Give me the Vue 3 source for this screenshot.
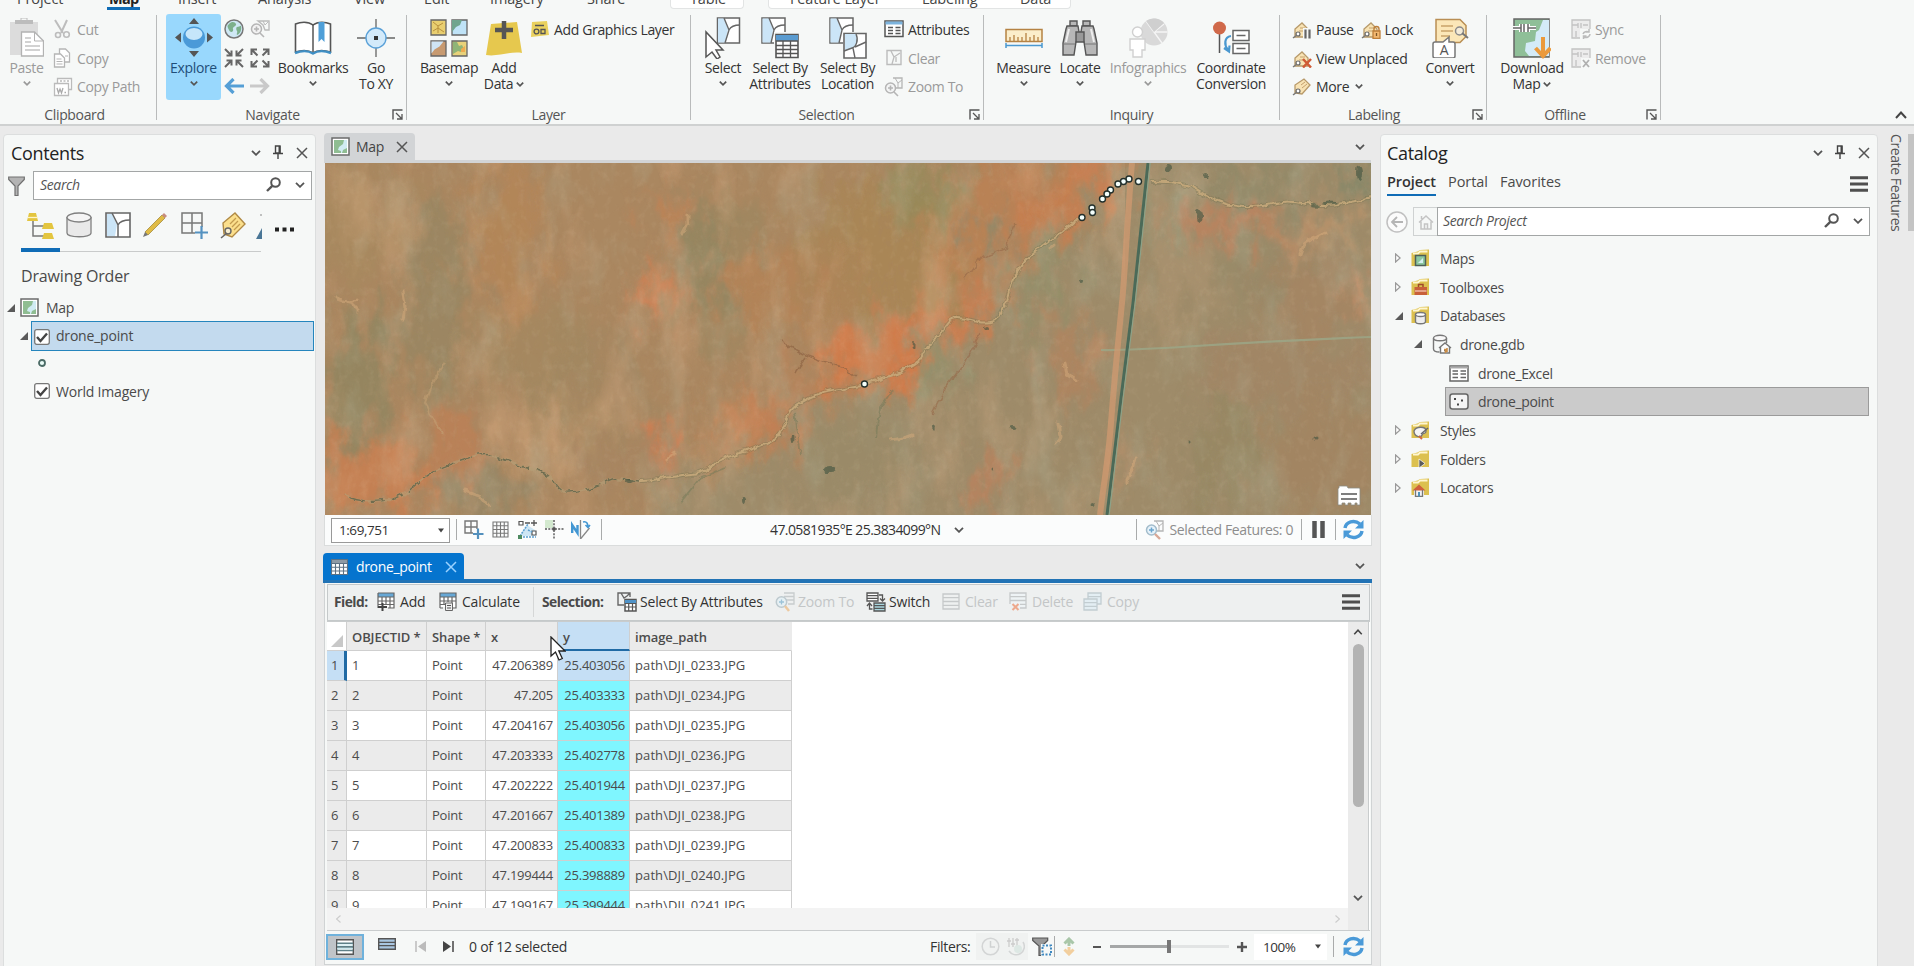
<script setup>
import { h } from 'vue'

const tag = '<path d="M3 17V9l7-6 6 6v8H5z" fill="#f8e3b4" stroke="#b89a6a" stroke-width="1.3"/><path d="M8 8l5 0M7 11h6" stroke="#c4a06c"/><circle cx="6" cy="14" r="2" fill="#fff" stroke="#666" stroke-width="1.2"/><path d="M5 15l-4 3" stroke="#777" stroke-width="1.5"/>'
const tagPlain = '<path d="M3 16V8l9-6 6 6-8 9z" fill="#f8e3b4" stroke="#b89a6a" stroke-width="1.3"/><path d="M9 8l4-3M10 11l5-4" stroke="#c4a06c"/><circle cx="6" cy="14" r="2" fill="#fff" stroke="#666" stroke-width="1.2"/><path d="M5 15l-4 3" stroke="#777" stroke-width="1.5"/>'
const folder = '<path d="M.5 4l6-1.5L9 1l9-.5V17H.5z" fill="#dcc04f"/><path d="M2 4.500h5l2-2h7.500" fill="none" stroke="#fff6cf" stroke-width="1.800"/>'
const zoomIc = '<path d="M9 1h9v10h-6" fill="none" stroke="#b5b5b5" stroke-width="1.300"/><path d="M11 1l3 5 4-3M14 6v5" fill="none" stroke="#b5b5b5"/>'

const icons = {
  paste: [34, 40, '<path d="M0 4h28v14H12v19H0z" fill="#dcdcdc"/><path d="M5 2h18v4H5z" fill="#bcbcbc"/><path d="M11 0h6v4h-6z" fill="none" stroke="#bcbcbc"/><path d="M11.500 14h13l9 9v15h-22z" fill="#fff" stroke="#b3b3b3" stroke-width="1.300"/><path d="M24.500 14v9h9" fill="none" stroke="#b3b3b3"/><path d="M15 20h6M15 24h6M15 28h15M15 32h15" stroke="#c4c4c4" stroke-width="1.500"/>'],
  cut: [18, 20, '<path d="M2 1l8 13M14 1L8 14" stroke="#bdbdbd" stroke-width="2" fill="none"/><circle cx="5" cy="16" r="2.500" fill="none" stroke="#bdbdbd" stroke-width="1.600"/><circle cx="13.500" cy="15.500" r="2.800" fill="none" stroke="#bdbdbd" stroke-width="1.600"/>'],
  copy: [18, 20, '<path d="M6.500 1h6l4 4v9h-10z" fill="#fff" stroke="#b5b5b5" stroke-width="1.300"/><path d="M1.500 6h6l4 4v9h-10z" fill="#fff" stroke="#b5b5b5" stroke-width="1.300"/><path d="M3.500 11h5M3.500 13.500h6M3.500 16h6M12 8h3" stroke="#b5b5b5"/>'],
  copyPath: [20, 20, '<path d="M4.500 1.500h14v11h-14z" fill="#fff" stroke="#bbb" stroke-width="1.300"/><path d="M7 4h9" stroke="#bbb" stroke-dasharray="2 1.500" stroke-width="1.500"/><path d="M1.500 6.500h14v12h-14z" fill="#fff" stroke="#bbb" stroke-width="1.300"/><path d="M4 11l1.500 5 1.500-4 1.500 4L10 11M11.500 15.500h1.500" fill="none" stroke="#aaa" stroke-width="1.300"/>'],
  explore: [40, 40, '<path d="M20 0l5 6H15zM20 39l5-6H15zM1 19.500l6-5v10zM39 19.500l-6-5v10z" fill="#555"/><circle cx="20" cy="19.500" r="11" fill="#4a9ad8"/><ellipse cx="20" cy="16" rx="8.500" ry="6" fill="#c6e6fa"/>'],
  globe: [20, 20, '<circle cx="10" cy="10" r="9" fill="#cfe8f5" stroke="#777" stroke-width="1.500"/><path d="M5 5c3-3 6-2 7 0s-4 3-3 5-2 5-4 1-2-4 0-6zM13 8c2 0 4-2 4-1 1 4-1 8-4 9-1-1 1-3 0-4s-1-4 0-4z" fill="#7cb08c"/>'],
  zoomSel: [20, 20, '<path d="M8 2h11v9h-4l-2-5z" fill="none" stroke="#bbb" stroke-width="1.400"/><path d="M13 2l2 4 3-3" fill="none" stroke="#bbb"/><circle cx="6.500" cy="10" r="5" fill="#f3f3f3" stroke="#b5b5b5" stroke-width="1.500"/><path d="M4 10h5M6.500 7.500v5M10 14l4 4" stroke="#b5b5b5" stroke-width="1.600"/>'],
  arrIn: [20, 20, '<path d="M1 1l6 6M19 1l-6 6M1 19l6-6M19 19l-6-6M2.500 7.500h5v-5M17.500 7.500h-5v-5M2.500 12.500h5v5M17.500 12.500h-5v5" fill="none" stroke="#666" stroke-width="2"/>'],
  arrOut: [20, 20, '<path d="M1.500 1.500l6 6M18.500 1.500l-6 6M1.500 18.500l6-6M18.500 18.500l-6-6M1.500 7V1.500H7M18.500 7V1.500H13M1.500 13v5.500H7M18.500 13v5.500H13" fill="none" stroke="#666" stroke-width="2"/>'],
  arrL: [20, 16, '<path d="M20 8H3M9.500 1L2.500 8l7 7" fill="none" stroke="#559fd6" stroke-width="3.200"/>'],
  arrR: [20, 16, '<path d="M0 8h17M10.500 1l7 7-7 7" fill="none" stroke="#c9c9c9" stroke-width="3.200"/>'],
  book: [38, 34, '<path d="M19 4C14 0 6 1 1.500 3v28c6-2 13-2 17.500 1 4-3 11-3 17.500-1V3C32 1 24 0 19 4z" fill="#fff" stroke="#555" stroke-width="1.600"/><path d="M1 32c7-2.500 14-2 18 .5 4-2.500 11-3 18-.5" fill="none" stroke="#3f8fc4" stroke-width="2.400"/><path d="M19 4v27" stroke="#555" stroke-width="1.500"/><path d="M24.500 1h6v20l-3-3-3 3z" fill="#4f9fd8"/>'],
  gotoxy: [38, 38, '<path d="M19 0v38M0 19h38" stroke="#666" stroke-width="1.300"/><circle cx="19" cy="19" r="10" fill="#d3eafa" stroke="#5aa1d8" stroke-width="1.400"/><path d="M17 17h4v4h-4z" fill="#333"/>'],
  basemap: [38, 38, '<g stroke="#666" stroke-width="1.300"><path d="M1 1h15v15H1z" fill="#e9cf70"/><path d="M22 1h15v15H22z" fill="#bfe3f7"/><path d="M1 22h15v15H1z" fill="#c79a70"/><path d="M22 22h15v15H22z" fill="#e8d27a"/></g><path d="M3 3l5 4 5-3M3 12l5-3 6 4M8 7v7" stroke="#b9903d" fill="none"/><path d="M22 1h10l-2 5-4 2-4 5z" fill="#6fa58e"/><path d="M1.500 22.500h12l-4 5-5 3-3 4z" fill="#cfe5f5"/><path d="M23 23h4l2 4 3-1 2 4-3 3-3-1-5 3z" fill="#8fb477"/><path d="M31 30l4-3v6h-4z" fill="#efab4f"/>'],
  addData: [36, 38, '<path d="M5 5l26-2 5 31c-12-2-24 4-36 2z" fill="#e6c84e"/><path d="M18 2v18M9 11h18" stroke="#555" stroke-width="4.500"/>'],
  addGfx: [19, 18, '<path d="M2 2l15-1 2 14-18 2z" fill="#ead15e"/><path d="M5 5.500h9" stroke="#555" stroke-width="1.500"/><circle cx="6.500" cy="11.500" r="2.400" fill="none" stroke="#555" stroke-width="1.300"/><path d="M11 9.500h4v4h-4z" fill="none" stroke="#555" stroke-width="1.300"/>'],
  select: [36, 42, '<path d="M12.500 1h22v25h-22z" fill="#fff" stroke="#666" stroke-width="1.500"/><path d="M13 1.500h6l4 11-3 13h-7z" fill="#cbe5f7"/><path d="M19 1l5 12-4 13M24 13c2-4 6-5 11-5" fill="none" stroke="#666" stroke-width="1.400"/><path d="M1 15v25l6-5 5 7 3-2-4-7h7z" fill="#fff" stroke="#555" stroke-width="1.500"/>'],
  selAttr: [38, 42, '<path d="M1 1h23v25H1z" fill="#fff" stroke="#666" stroke-width="1.500"/><path d="M1.500 1.500H8l4 11-2 13H1.500z" fill="#cbe5f7"/><path d="M8 1l5 12-3 13M13 13c2-4 6-5 11-5" fill="none" stroke="#666" stroke-width="1.400"/><path d="M13 15h25v27H13z" fill="#f6f8f7"/><path d="M15 17.500h22v23H15z" fill="#fff" stroke="#555" stroke-width="1.600"/><path d="M15 18h22v6H15z" fill="#5a9bd0"/><path d="M15 24h22M15 28.500h22M15 32.500h22M15 36.500h22M22 24v17M29.500 24v17" stroke="#555" stroke-width="1.300"/>'],
  selLoc: [38, 42, '<path d="M1 1h23v25H1z" fill="#fff" stroke="#666" stroke-width="1.500"/><path d="M1.500 1.500H8l4 11-2 13H1.500z" fill="#cbe5f7"/><path d="M8 1l5 12-3 13M13 13c2-4 6-5 11-5" fill="none" stroke="#666" stroke-width="1.400"/><path d="M14 15h24v27H14z" fill="#f6f8f7"/><path d="M15 16.500h22v24.500H15z" fill="#fff" stroke="#666" stroke-width="1.600"/><path d="M16 17h11c3 5 0 12-4 14l-7 3z" fill="#cbe5f7"/><path d="M27 17c3 6 0 13-4 14l-8 3M26 30l11-5M24 31l2 10" fill="none" stroke="#666" stroke-width="1.400"/>'],
  attrs: [20, 18, '<path d="M1 1h18v15.500H1z" fill="#fff" stroke="#555" stroke-width="1.500"/><path d="M1.500 1.500h17v3h-17z" fill="#7cb3dd"/><path d="M4 7.500h5M4 10.500h5M4 13.500h5M11.500 7.500h5M11.500 10.500h5M11.500 13.500h5" stroke="#555" stroke-width="1.600"/>'],
  clear: [16, 18, '<path d="M1 1.500h14v14H1z" fill="none" stroke="#bcbcbc" stroke-width="1.400"/><path d="M5 2l3 6-2 7M8 8l6-4M10 8v5" fill="none" stroke="#bcbcbc" stroke-width="1.300"/>'],
  zoomTo: [20, 20, zoomIc + '<circle cx="6.500" cy="11" r="5" fill="#f4f5f5" stroke="#b5b5b5" stroke-width="1.500"/><path d="M4 11h5M6.500 8.500v5M10 15l4 4" stroke="#b5b5b5" stroke-width="1.600"/>'],
  measure: [38, 20, '<path d="M1 1.500h36v12H1z" fill="#fbeecb" stroke="#b58243" stroke-width="1.500"/><path d="M5 13V9M9 13V7M13 13V9M17 13V9M21 13V5M25 13V9M29 13V7M33 13V9" stroke="#b58243" stroke-width="1.300"/><path d="M1 17.500h36M1 15v5M37 15v5" stroke="#4a98d0" stroke-width="1.500"/>'],
  locate: [36, 36, '<g fill="#b7b7b7" stroke="#555" stroke-width="1.400"><path d="M8 1h7v5H8zM21 1h7v5h-7z"/><path d="M5 6h11l1 6v6l-3 4-2 13H1V23L4 9zM31 6H20l-1 6v6l3 4 2 13h11V23L32 9z"/><path d="M14 12h8v10h-8z" fill="#999"/></g><path d="M2 24h11M23 24h11" stroke="#777"/><path d="M7 9L4 22M29 9l3 13" stroke="#eee" stroke-width="2"/>'],
  info: [40, 40, '<circle cx="26" cy="14" r="13.500" fill="#d9d9d9"/><path d="M26 14L18 3M26 14h13.500M26 14l8 11M26 14l10-8" stroke="#f5f5f5" stroke-width="1.300"/><path d="M26 14L18 3A13.500 13.500 0 0 1 36 5z" fill="#cfcfcf"/><circle cx="9.500" cy="14" r="5" fill="#fff" stroke="#d0d0d0" stroke-width="1.400"/><path d="M2 21h15v11h-3v7H5v-7H2z" fill="#fff" stroke="#d0d0d0" stroke-width="1.400"/>'],
  coord: [38, 34, '<path d="M7.500 10v22" stroke="#555" stroke-width="1.500"/><circle cx="7.500" cy="7" r="6.500" fill="#d0694a"/><path d="M21 9.500h16v10H21zM21 22.500h16v10H21z" fill="#fff" stroke="#666" stroke-width="1.500"/><path d="M24.500 14.500h9M24.500 27.500h9" stroke="#666" stroke-width="1.500"/><path d="M19 15c-7 1-7 9-3 14M12 27l5 3.500.5-6" fill="none" stroke="#4a98d0" stroke-width="2.200"/>'],
  pause: [20, 19, tag + '<path d="M11 8h9v11h-9z" fill="#f6f8f7"/><path d="M13.500 9.500v9M17.500 9.500v9" stroke="#666" stroke-width="2.200"/>'],
  lock: [20, 19, tag + '<path d="M12 11h7v7.500h-7z" fill="#f3b870" stroke="#bd7f3a" stroke-width="1.300"/><path d="M13 11V9a2.500 2.500 0 0 1 5 0v2" fill="none" stroke="#bd7f3a" stroke-width="1.400"/><path d="M15.500 13v3" stroke="#7c5424" stroke-width="1.300"/>'],
  unplaced: [20, 19, tag + '<path d="M11 10l8 8.500M19 10l-8 8.500" stroke="#cf5b36" stroke-width="2.500"/>'],
  more: [20, 19, tagPlain],
  convert: [37, 40, '<path d="M4 1.500h24l6 6v11l-6 6H4z" fill="#fbe7b8" stroke="#b98e54" stroke-width="1.500"/><path d="M9 8h12M9 13h12M9 18h9" stroke="#c9a469" stroke-width="1.500"/><circle cx="27.500" cy="13" r="4" fill="#f4ecd9" stroke="#8a8a8a" stroke-width="1.500"/><path d="M30 15l6 5" stroke="#777" stroke-width="2"/><path d="M3 24h8l6-5v5h4a2 2 0 0 1 2 2v12a2 2 0 0 1-2 2H3a2 2 0 0 1-2-2V26a2 2 0 0 1 2-2z" fill="#fff" stroke="#777" stroke-width="1.500"/><text x="12" y="37" text-anchor="middle" font-size="14" fill="#555">A</text>'],
  download: [38, 42, '<path d="M1 2h35v38H1z" fill="#8fbf98" stroke="#666" stroke-width="1.500"/><path d="M36 3H30l-4 10-3 2-1 9-9 2-1 8 4 5h20z" fill="#d4ebf8"/><path d="M0 11h8M8 7v8M11 7v8M15 7v8M15 11h8" stroke="#fff" stroke-width="4"/><path d="M0 11h8M8 7v8M11 7v8M15 7v8M15 11h8" stroke="#666" stroke-width="1.500"/><path d="M30 20v19M22.500 31l7.500 8 7.500-8" fill="none" stroke="#eb9a3c" stroke-width="4"/>'],
  sync: [20, 20, '<path d="M1 1h18v18H1z" fill="#ececec" stroke="#c2c2c2" stroke-width="1.300"/><path d="M1 6h6M7 4v5M10 4v5M12 6h5M5 12v6" stroke="#c2c2c2" stroke-width="1.300"/><path d="M9 10h11v10H9z" fill="#f6f8f7"/><path d="M12 15a4 3.500 0 0 1 6-2M19 15a4 3.500 0 0 1-6 3M18 10v3h-3M12.500 20v-3h3" fill="none" stroke="#bbb" stroke-width="1.500"/>'],
  remove: [20, 20, '<path d="M1 1h18v18H1z" fill="#ececec" stroke="#c2c2c2" stroke-width="1.300"/><path d="M1 6h6M7 4v5M10 4v5M12 6h5M5 12v6" stroke="#c2c2c2" stroke-width="1.300"/><path d="M10 10h10v10H10z" fill="#f6f8f7"/><path d="M12 12l6 7M18 12l-6 7" stroke="#b0b0b0" stroke-width="1.800"/>'],
  chev: [10, 6, '<path d="M1 .8l4 4 4-4" fill="none" stroke="#555" stroke-width="1.800"/>'],
  chevS: [8, 5, '<path d="M.8 .6L4 3.800 7.200 .6" fill="none" stroke="#555" stroke-width="1.700"/>'],
  chevG: [8, 5, '<path d="M.8 .6L4 3.800 7.200 .6" fill="none" stroke="#999" stroke-width="1.700"/>'],
  chevUp: [12, 8, '<path d="M1 7l5-5.500L11 7" fill="none" stroke="#444" stroke-width="2"/>'],
  launcher: [11, 11, '<path d="M1 10.500V1h9.500" fill="none" stroke="#555" stroke-width="1.400"/><path d="M4 4l6 6M10 5v5H5" fill="none" stroke="#555" stroke-width="1.300"/>'],
  pin: [10, 14, '<path d="M2.500 1h4.500v7H2.500zM0 8.500h10M5 9v5" fill="none" stroke="#444" stroke-width="1.400"/><path d="M6.500 1v7" stroke="#444" stroke-width="2"/>'],
  x: [12, 12, '<path d="M1 1l10 10M11 1L1 11" stroke="#555" stroke-width="1.500"/>'],
  xw: [12, 12, '<path d="M1 1l10 10M11 1L1 11" stroke="#9bd2ff" stroke-width="1.500"/>'],
  funnel: [17, 20, '<path d="M.7 1h15.600v2.500L10 10v9.500H7V10L.7 3.500z" fill="#b4b4b4" stroke="#707070" stroke-width="1.200"/>'],
  mag: [15, 15, '<circle cx="9.500" cy="5.500" r="4.300" fill="none" stroke="#555" stroke-width="2"/><path d="M6.300 8.800L1 14" stroke="#555" stroke-width="2.400"/>'],
  order: [27, 28, '<path d="M6 9v15h11M6 14h11" fill="none" stroke="#777" stroke-width="1.500"/><path d="M2 1h7l2 8H0zM17 11h8l2 6H15zM17 21h8l2 6H15z" fill="#e3c53f"/><path d="M1 5.500h10" stroke="#fff5c8" stroke-width="1.300"/>'],
  cyl: [26, 26, '<path d="M1 5v16c0 5 24 5 24 0V5" fill="#e9e9e9" stroke="#808080" stroke-width="1.300"/><ellipse cx="13" cy="5.500" rx="12" ry="4.500" fill="#f5f5f5" stroke="#808080" stroke-width="1.300"/>'],
  selLayer: [26, 26, '<path d="M1 1h24v24H1z" fill="#fff" stroke="#666" stroke-width="1.600"/><path d="M2 2h5l5 11-2 11H2z" fill="#cbe5f7"/><path d="M7 1l6 12v12M13 13c2-4 6-5 12-5" fill="none" stroke="#666" stroke-width="1.500"/>'],
  pencil: [26, 26, '<path d="M3 20L20 3l3 3L6 23z" fill="#e0bb45" stroke="#a58c3e" stroke-width=".8"/><path d="M3 20l-2 5 5-2z" fill="#777"/><path d="M20 3l2-2 3 3-2 2z" fill="#c78c80"/>'],
  gridAdd: [28, 28, '<path d="M1 1h20v20H1zM11 1v20M1 11h20" fill="none" stroke="#777" stroke-width="1.500"/><path d="M14 15h13v13H14z" fill="#f6f8f7"/><path d="M20.500 14v13M14 20.500h13" stroke="#5592c0" stroke-width="2.200"/>'],
  tagBig: [26, 28, '<path d="M4 22L3 11 15 1l10 11-13 13z" fill="#fbdf8c" stroke="#b08a45" stroke-width="1.400"/><path d="M10 12l6-6M12 15l6-6M14 18l6-6" stroke="#c39c4f" stroke-width="1.300"/><circle cx="8" cy="19" r="3" fill="#f7eed0" stroke="#666" stroke-width="1.400"/><path d="M7 21l-6 5" stroke="#666" stroke-width="1.600"/>'],
  wedge: [6, 28, '<path d="M6 16v11H0z" fill="#4a7696"/><path d="M5 2v2" stroke="#888"/>'],
  dots: [20, 5, '<path d="M0 .5h4v4H0zM7.500 .5h4v4h-4zM15 .5h4v4h-4z" fill="#222"/>'],
  map: [19, 19, '<path d="M1 1h17v17H1z" fill="#fff" stroke="#6b6b6b" stroke-width="1.500"/><path d="M3 3h13v13H3z" fill="#d0ebf3"/><path d="M3 3h10l-1 4-4 3-1 3 3 1v2H3z" fill="#8fbd92"/><path d="M11 16l1-3 4-2v5z" fill="#8fbd92"/>'],
  triOpen: [8, 8, '<path d="M8 0v8H0z" fill="#5a5a5a"/>'],
  triShut: [6, 10, '<path d="M.6 1l4.500 4L.6 9z" fill="#fff" stroke="#999" stroke-width="1.200"/>'],
  check: [16, 16, '<rect x=".7" y=".7" width="14.600" height="14.600" rx="2" fill="#fff" stroke="#777" stroke-width="1.300"/><path d="M3 8l3.500 4L13 4.500" fill="none" stroke="#444" stroke-width="2.400"/>'],
  pt: [8, 8, '<circle cx="4" cy="4" r="3" fill="#eafcf8" stroke="#4b6b66" stroke-width="1.800"/>'],
  menu: [18, 16, '<path d="M0 1.700h18M0 8h18M0 14.300h18" stroke="#4f4f4f" stroke-width="3"/>'],
  back: [22, 22, '<circle cx="11" cy="11" r="10" fill="#fbfbfb" stroke="#c0c0c0" stroke-width="1.500"/><path d="M17 11H6.500M11 6l-5 5 5 5" fill="none" stroke="#b5b5b5" stroke-width="1.800"/>'],
  home: [16, 16, '<path d="M1 8.500L8 2l7 6.500M3 7.500V15h10V7.500M6.500 15v-5h3v5M3.500 5V2" fill="none" stroke="#c4c4c4" stroke-width="1.500"/>'],
  fMaps: [19, 18, folder + '<path d="M4.500 6.500h10v10h-10z" fill="#8cc79f" stroke="#4e5f58" stroke-width="1.500"/><path d="M7 14l5-5v5z" fill="#d5eef2"/>'],
  fTool: [19, 18, folder + '<path d="M3.500 9h12.500v8H3.500z" fill="#c8603a"/><path d="M7.500 9V6.500h4.500V9" fill="none" stroke="#a04a2a" stroke-width="1.500"/><path d="M4 13h11.500" stroke="#f4c6b2" stroke-width="1.300"/>'],
  fDb: [19, 19, folder + '<path d="M4.500 8.500v7c0 3 10 3 10 0v-7" fill="#eee" stroke="#777" stroke-width="1.400"/><ellipse cx="9.500" cy="8.500" rx="5" ry="2" fill="#fff" stroke="#777" stroke-width="1.400"/>'],
  fStyle: [19, 19, folder + '<path d="M3 10c2-5 12-5 12 0 0 4-3 1-4 4s-8 2-8-4z" fill="#f5f5f5" stroke="#777" stroke-width="1.400"/><path d="M10 13l7-6" stroke="#666" stroke-width="1.500"/><path d="M8 15l3 3" stroke="#d0693f" stroke-width="2"/>'],
  fFold: [19, 19, folder + '<path d="M8 9l6 4.500L8 18z" fill="#5a5a5a" stroke="#fff" stroke-width=".7"/>'],
  fLoc: [19, 19, folder + '<path d="M3 12h10v7H3z" fill="#f3f3f3"/><path d="M1.500 12.500L8 6.500l6.500 6z" fill="#cf603c"/><path d="M4.500 12v6.500h7V12" fill="none" stroke="#777" stroke-width="1.300"/><path d="M8 14v4.500" stroke="#4d93bd" stroke-width="2"/>'],
  gdb: [20, 20, '<path d="M1.500 4v11c0 2 3 3 6 3M14.500 4v5" fill="none" stroke="#777" stroke-width="1.400"/><ellipse cx="8" cy="4" rx="6.500" ry="2.800" fill="#f8f8f8" stroke="#777" stroke-width="1.400"/><path d="M7 14l6-5 6 5M8.500 13v6h9v-6" fill="#fff" stroke="#777" stroke-width="1.400"/><path d="M12 15.500h1.500V19M15 14v4" stroke="#c98d47" stroke-width="1.600"/>'],
  tbl: [20, 17, '<path d="M1 1h18v15H1z" fill="#fff" stroke="#666" stroke-width="1.500"/><path d="M1 2.500h18" stroke="#aaa" stroke-width="2"/><path d="M3.500 6h5.500M3.500 9h5.500M3.500 12.500h5.500M11.500 6H17M11.500 9H17M11.500 12.500H17" stroke="#666" stroke-width="1.400"/>'],
  ptTbl: [20, 17, '<rect x="1" y="1" width="18" height="15" rx="2.500" fill="#f5f5f5" stroke="#666" stroke-width="1.500"/><path d="M5 5h2v2H5zM12 6.500h2v2h-2zM8 10.500h2v2H8z" fill="#444"/>'],
  sGridAdd: [20, 20, '<path d="M1 1h12v12H1zM7 1v12M1 7h12" fill="none" stroke="#777" stroke-width="1.400"/><path d="M9 9h11v11H9z" fill="#fbfcfc"/><path d="M14 8.500v10.500M9 14h10.500" stroke="#5390bd" stroke-width="2.200"/>'],
  sGrid: [17, 17, '<path d="M1 1h15v15H1zM4.750 1v15M8.500 1v15M12.250 1v15M1 4.750h15M1 8.500h15M1 12.250h15" fill="none" stroke="#777" stroke-width="1.100"/>'],
  sSnap: [20, 19, '<path d="M1.500 16L9 5l8 5v6z" fill="#cde6f5"/><path d="M1 1.500h4v3.500H1zM14 11h4v4h-4z" fill="#fff" stroke="#555" stroke-width="1.200"/><path d="M2 16l8-12M10 10l4 2M5 17h13" stroke="#5b9fd0" stroke-width="1.500" stroke-dasharray="2 1"/><path d="M16 0v6M13 3h6M7 3h5" stroke="#555" stroke-width="1.300"/><path d="M0 15h4v4H0z" fill="#4e8a60"/>'],
  sCross: [19, 19, '<path d="M0 0h8v8H0z" fill="#d3e9cf"/><path d="M9 0v19M0 9h19" stroke="#555" stroke-width="1.400" stroke-dasharray="2 1.300"/><path d="M7.500 7.500h3v3h-3z" fill="#555"/>'],
  sNorth: [20, 19, '<path d="M1.200 13V5l5.300 8V5" fill="none" stroke="#4397d3" stroke-width="2.400"/><path d="M9.500 0v19l9-11" fill="none" stroke="#888" stroke-width="1.300"/><path d="M12 2c4-1 5 2 5 5M14.500 5l2.500 2.500L19 5" fill="none" stroke="#4397d3" stroke-width="1.600"/>'],
  selFeat: [20, 20, zoomIc + '<circle cx="6.500" cy="10" r="5" fill="#e6f2fa" stroke="#a3bccb" stroke-width="1.500"/><path d="M4 10h5M6.500 7.500v5" stroke="#6ba6cf" stroke-width="1.500"/><path d="M10 14l5 5" stroke="#d9a896" stroke-width="2.400"/>'],
  pauseBig: [13, 17, '<path d="M2.500 0v17M10.500 0v17" stroke="#555" stroke-width="4.500"/>'],
  refresh: [21, 21, '<path d="M2 9C3 3 11 0 17 5M19 12C18 18 10 21 4 16" fill="none" stroke="#4a9ad8" stroke-width="3.500"/><path d="M20.500 1v8.500H12zM.5 20v-8.500H9z" fill="#4a9ad8"/>'],
  tabTbl: [17, 16, '<path d="M0 0h17v16H0z" fill="#fff"/><path d="M0 0h17v4H0z" fill="#8e9aa5"/><path d="M.5 .5h16v15H.5zM0 4.500h17M0 8.200h17M0 12h17M4.500 4v12M8.500 4v12M12.500 4v12" fill="none" stroke="#5d7183" stroke-width="1.100"/>'],
  addF: [18, 19, '<path d="M1 1h16v14H1z" fill="#fff"/><path d="M1 1h16v4H1z" fill="#67a8d6"/><path d="M1 1h16v15h-6M1 16V1M1 5h16M1 9h16M1 12.500h16M5 5v8M9 5v8M13 5v11" fill="none" stroke="#666" stroke-width="1.200"/><path d="M5.500 11v8M1 15h9" stroke="#444" stroke-width="2"/>'],
  calc: [18, 19, '<path d="M1 1h16v14H1z" fill="#fff"/><path d="M1 1h16v4H1z" fill="#67a8d6"/><path d="M1 16V1h16v15h-3M1 16h3M1 5h16M1 9h16M1 12.500h5M5 5v8M9 5v5M13 5v11" fill="none" stroke="#666" stroke-width="1.200"/><path d="M6.500 11h7v7.500h-7z" fill="#eee" stroke="#666"/><path d="M8 13.500h4M8 16h4" stroke="#555" stroke-width="1.200"/>'],
  selBy: [20, 20, '<path d="M7 13H1V1h12v4M4 1l3 5 3-2 3-3" fill="none" stroke="#666" stroke-width="1.400"/><path d="M8 7.500h11v11.500H8z" fill="#fff" stroke="#555" stroke-width="1.500"/><path d="M8 8h11v3H8z" fill="#4e92c7"/><path d="M8 11.500h11M8 15h11M11.700 11v8M15.500 11v8" stroke="#555" stroke-width="1.200"/>'],
  zoomG: [20, 20, '<path d="M9 1h10v11H13M9 4.500h10M11 8h8" fill="none" stroke="#c8cccd" stroke-width="1.300"/><circle cx="6.500" cy="10" r="5.200" fill="#e6f0f4" stroke="#bdc9ce" stroke-width="1.500"/><path d="M4 10h5M6.500 7.500v5" stroke="#9cc3d8" stroke-width="1.300"/><path d="M10 14l4 5" stroke="#ecc9a0" stroke-width="2.500"/>'],
  swap: [20, 20, '<path d="M1 1h11v8H1zM1 3.700h11M1 6.300h11" fill="#fff" stroke="#555" stroke-width="1.300"/><path d="M8 11h11v8H8zM8 13.700h11M8 16.300h11" fill="#a9d6de" stroke="#555" stroke-width="1.300"/><path d="M13 3h3.500v6M14 6.500l2.500 2.500L19 6.500M6.500 17H3.500v-6M1 14l2.500-3L6 14" fill="none" stroke="#555" stroke-width="1.300"/>'],
  clr: [18, 17, '<path d="M1 1h16v15H1zM1 4.700h16M1 8.500h16M1 12.300h16" fill="none" stroke="#c6c9ca" stroke-width="1.300"/>'],
  del: [18, 19, '<path d="M1 12V1h16v15h-6M1 4.700h16M1 8.500h16M11 12.300h6" fill="#eef3f5" stroke="#c6c9ca" stroke-width="1.300"/><path d="M3.500 12l6 6M9.500 12l-6 6" stroke="#eda98d" stroke-width="2"/>'],
  cpy: [19, 19, '<path d="M5 1h13v11H5zM5 4.700h13" fill="#e3eef3" stroke="#c2cdd1" stroke-width="1.300"/><path d="M1 7h13v11H1zM1 10.700h13M1 14.300h13" fill="#e3eef3" stroke="#c2cdd1" stroke-width="1.300"/>'],
  all: [18, 16, '<path d="M.7 .7h16.600v14.600H.7z" fill="#fff" stroke="#555" stroke-width="1.400"/><path d="M1 4.300h16M1 7.900h16M1 11.500h16" stroke="#5f8088" stroke-width="1.600"/><path d="M1 6h16M1 9.700h16" stroke="#bfe3ea"/>'],
  selRows: [18, 12, '<path d="M.7 .7h16.600v10.600H.7z" fill="#a9c6e0" stroke="#555" stroke-width="1.400"/><path d="M1 4.300h16M1 7.700h16" stroke="#555" stroke-width="1.200"/>'],
  first: [11, 11, '<path d="M1 0v11" stroke="#bbb" stroke-width="1.500"/><path d="M11 0v11L3 5.500z" fill="#bbb"/>'],
  last: [11, 11, '<path d="M10 0v11" stroke="#444" stroke-width="1.500"/><path d="M0 0v11l8-5.500z" fill="#444"/>'],
  clock: [19, 19, '<circle cx="9.500" cy="9.500" r="8.300" fill="none" stroke="#d3d5d5" stroke-width="1.500"/><path d="M9.500 4v6H14" fill="none" stroke="#cfd2d2" stroke-width="1.500"/>'],
  range: [19, 19, '<path d="M17 5a8.300 8.300 0 1 1-14 9" fill="none" stroke="#d3d5d5" stroke-width="1.500"/><path d="M3 1v9M7 1v9M11 1v9M1 4h4M5 7h4M9 3h4" stroke="#ccc" stroke-width="1.300"/><circle cx="12" cy="12" r="4" fill="#dde8e4"/>'],
  filt: [20, 19, '<path d="M.7 1h15v2.500L10 9v9.500H7V9L.7 3.500z" fill="#999" stroke="#555" stroke-width="1.200"/><path d="M9 7h11v12H9z" fill="#f6f8f7"/><path d="M10.500 8.500h8.500v9h-8.500z" fill="none" stroke="#3f88c0" stroke-width="2" stroke-dasharray="2 1.500"/>'],
  upDown: [12, 19, '<path d="M6 9V3M1.500 6.500L6 2l4.500 4.500" fill="none" stroke="#a9c7a9" stroke-width="3"/><path d="M6 10v6M1.500 12.500L6 17l4.500-4.500" fill="none" stroke="#f2cf9e" stroke-width="3"/>'],
  minus: [8, 10, '<path d="M0 5h8" stroke="#555" stroke-width="2"/>'],
  plus: [10, 10, '<path d="M0 5h10M5 0v10" stroke="#555" stroke-width="2.400"/>'],
  drop: [6, 5, '<path d="M0 .5h6L3 4.500z" fill="#444"/>'],
  corner: [12, 12, '<path d="M12 0v12H0z" fill="#c8c8c8"/>'],
  left: [5, 8, '<path d="M4.500 .5l-4 3.500 4 3.500" fill="none" stroke="#ccc" stroke-width="1.200"/>'],
  right: [5, 8, '<path d="M.5 .5l4 3.500-4 3.500" fill="none" stroke="#ccc" stroke-width="1.200"/>'],
  note: [24, 22, '<path d="M1 4a1 1 0 0 1 1-1V1h8l1 2h11a1 1 0 0 1 1 1v16h-3v-2h-2v2h-4v-2h-3v2H8v-2H5v2H1z" fill="#fff" stroke="#8a8a80" stroke-width=".8"/><path d="M4 9h16M4 14h16" stroke="#555" stroke-width="1.700"/>'],
  cursor: [16, 25, '<path d="M1 1v19l4.500-4 3.500 8 3.300-1.500L8.800 15H15z" fill="#fff" stroke="#222" stroke-width="1.300"/>']
}
const Icon = (p) => {
  const [w, ht, body] = icons[p.n]
  return h('svg', { class: 'ic', width: w, height: ht, viewBox: `0 0 ${w} ${ht}`, innerHTML: body })
}
Icon.props = ['n']

const tabs = [
  ['Project', 't1'], ['Map', 't2'], ['Insert', 't3'], ['Analysis', 't4'], ['View', 't5'], ['Edit', 't6'],
  ['Imagery', 't7'], ['Share', 't8']
]
const groups = [
  { id: 'g1', name: 'Clipboard', items: [
    { t: 'big', i: 'paste', l: ['Paste'], c: 1, off: 1 },
    { t: 'col', rows: [[['cut', 'Cut']], [['copy', 'Copy']], [['copyPath', 'Copy Path']]], off: 1 }] },
  { id: 'g2', name: 'Navigate', launch: 1, items: [
    { t: 'big', i: 'explore', l: ['Explore'], c: 1, on: 1 },
    { t: 'grid', icons: ['globe', 'zoomSel', 'arrIn', 'arrOut', 'arrL', 'arrR'] },
    { t: 'big', i: 'book', l: ['Bookmarks'], c: 1 },
    { t: 'big', i: 'gotoxy', l: ['Go', 'To XY'] }] },
  { id: 'g3', name: 'Layer', items: [
    { t: 'big', i: 'basemap', l: ['Basemap'], c: 1 },
    { t: 'big', i: 'addData', l: ['Add', 'Data'], ci: 1 },
    { t: 'col', rows: [[['addGfx', 'Add Graphics Layer']]] }] },
  { id: 'g4', name: 'Selection', launch: 1, items: [
    { t: 'big', i: 'select', l: ['Select'], c: 1 },
    { t: 'big', i: 'selAttr', l: ['Select By', 'Attributes'] },
    { t: 'big', i: 'selLoc', l: ['Select By', 'Location'] },
    { t: 'col', rows: [[['attrs', 'Attributes']], [['clear', 'Clear', 1]], [['zoomTo', 'Zoom To', 1]]] }] },
  { id: 'g5', name: 'Inquiry', items: [
    { t: 'big', i: 'measure', l: ['Measure'], c: 1 },
    { t: 'big', i: 'locate', l: ['Locate'], c: 1 },
    { t: 'big', i: 'info', l: ['Infographics'], c: 1, off: 1 },
    { t: 'big', i: 'coord', l: ['Coordinate', 'Conversion'] }] },
  { id: 'g6', name: 'Labeling', launch: 1, items: [
    { t: 'col', rows: [[['pause', 'Pause'], ['lock', 'Lock']], [['unplaced', 'View Unplaced']], [['more', 'More', 0, 1]]] },
    { t: 'big', i: 'convert', l: ['Convert'], c: 1 }] },
  { id: 'g7', name: 'Offline', launch: 1, items: [
    { t: 'big', i: 'download', l: ['Download', 'Map'], ci: 1 },
    { t: 'col', rows: [[['sync', 'Sync']], [['remove', 'Remove']]], off: 1 }] }
]
const contentTabs = ['order', 'cyl', 'selLayer', 'pencil', 'gridAdd', 'tagBig', 'wedge']
const catalog = [
  ['fMaps', 'Maps', 0, 0], ['fTool', 'Toolboxes', 0, 0], ['fDb', 'Databases', 0, 1], ['gdb', 'drone.gdb', 1, 1],
  ['tbl', 'drone_Excel', 2], ['ptTbl', 'drone_point', 2], ['fStyle', 'Styles', 0, 0], ['fFold', 'Folders', 0, 0], ['fLoc', 'Locators', 0, 0]
]
const rows = [
  ['47.206389', '25.403056'], ['47.205', '25.403333'], ['47.204167', '25.403056'], ['47.203333', '25.402778'],
  ['47.202222', '25.401944'], ['47.201667', '25.401389'], ['47.200833', '25.400833'], ['47.199444', '25.398889'], ['47.199167', '25.399444']
].map((r, i) => ({ n: i + 1, x: r[0], y: r[1], p: `path\\DJI_0${233 + i}.JPG` }))
const pts = [[813.5, 18.5], [804, 16], [798.5, 18.5], [793, 21], [785.5, 27], [782, 31], [777.5, 36], [767, 45], [767.5, 49.5], [757, 54.5], [539.5, 221]]

// cx, cy, rx, ry, colour, opacity
const blobs = [
  [110, 130, 30, 110, '#8d8562', .5], [30, 220, 32, 70, '#8c8560', .7], [20, 60, 60, 60, '#a88a5f', .8], [40, 315, 70, 34, '#c67f52', .9],
  [130, 290, 30, 34, '#bd8055', .8], [185, 80, 34, 90, '#b88657', .6], [400, 110, 40, 80, '#988760', .5], [380, 90, 14, 60, '#8b8660', .6], [560, 90, 90, 70, '#a98652', .6],
  [690, 50, 60, 60, '#c37f4f', .6], [765, 15, 30, 26, '#d07e50', .75], [725, 50, 24, 30, '#cb7d4e', .6], [560, 195, 60, 30, '#d67a49', .85], [600, 170, 36, 26, '#d67a49', .75], [645, 150, 36, 10, '#d97a4a', .8],
  [440, 130, 40, 40, '#c08253', .6], [640, 100, 20, 46, '#c57f50', .6], [600, 30, 40, 30, '#938a5a', .7], [330, 130, 10, 24, '#dd7c4d', .9], [340, 50, 8, 25, '#cd804f', .8], [345, 278, 12, 18, '#e07848', .9],
  [420, 255, 34, 22, '#c87d50', .7], [480, 225, 26, 30, '#c9805384', .7], [450, 262, 20, 30, '#cc7d4f', .5], [235, 270, 50, 34, '#bb956a', .8], [155, 330, 55, 26, '#988665', .9], [210, 190, 60, 50, '#a0895f', .5],
  [270, 230, 60, 60, '#9f8861', .5], [300, 300, 50, 20, '#a68562', .7], [480, 130, 60, 50, '#b08457', .5], [665, 72, 22, 14, '#878a6c', .9],
  [720, 120, 30, 50, '#928d69', .8], [610, 200, 18, 40, '#8f926f', .8], [740, 180, 20, 60, '#a58a66', .7], [745, 200, 20, 50, '#b8805a', .5],
  [660, 320, 14, 34, '#c57f58', .7], [530, 300, 60, 40, '#988a6a', .7], [850, 90, 30, 90, '#ab9370', .7], [830, 60, 14, 30, '#979270', .8],
  [900, 62, 50, 12, '#c4805a', .8], [940, 66, 44, 14, '#c1835e', .7], [1000, 70, 40, 16, '#bd936a', .8], [930, 20, 60, 16, '#908a68', .8],
  [980, 130, 60, 40, '#a58563', .8], [930, 110, 30, 40, '#978a68', .7], [960, 210, 90, 40, '#a38464', .7], [900, 290, 30, 60, '#968663', .7], [1000, 300, 60, 60, '#a48360', .7],
  [1036, 138, 9, 15, '#dc966c', .9], [800, 300, 7, 30, '#cc946e', .7], [1034, 15, 12, 20, '#748469', .7], [770, 320, 14, 30, '#a48c68', .7]
]
const scrub = [[875, 54, 3, 6], [873, 49, 2, 3], [843, 5, 4, 4], [880, 12, 3, 2], [506, 306, 6, 3], [502, 308, 3, 2], [608, 265, 2, 2.5], [687, 265, 2.5, 2], [418, 337, 2, 4], [757, 118, 2, 2], [768, 342, 2.5, 2], [588, 182, 1.5, 3], [1034, 10, 3, 7], [1005, 40, 8, 1.5], [990, 42, 5, 1.5], [668, 306, 1.5, 1.5], [661, 165, 2, 2], [467, 276, 1.5, 4], [305, 318, 4, 2], [864, 278, 1.5, 1.5], [990, 275, 1.5, 1.5]]
const stream = 'M826 19C845 18 862 20 874 28S905 45 928 44S955 36 969 39S1010 45 1045 34M757 55C745 60 735 70 725 77S702 95 698 101S687 115 685 124S678 148 672 155S655 160 645 157S628 153 622 162L614 173C606 180 598 185 598 192S586 203 578 208L540 221C520 226 505 226 496 230S467 242 465 250S456 270 450 276S420 288 401 295S385 310 367 311S330 319 313 318'
const stream2 = 'M313 318C295 316 292 313 282 318S260 328 245 329S232 322 225 314S190 302 174 295S150 293 141 296S110 305 97 316S80 334 63 337S30 338 19 332'
</script>

<template>
  <div class="app">
    <header class="ribbon">
      <nav class="tabs">
        <span v-for="t in tabs" :key="t[0]" class="tab" :class="[t[1], { cur: t[0] === 'Map' }]">{{ t[0] }}</span>
        <span class="ctx ctx1"><b class="tab">Table</b></span>
        <span class="ctx ctx2"><b class="tab">Feature Layer</b><b class="tab">Labeling</b><b class="tab">Data</b></span>
      </nav>
      <div class="groups">
        <section v-for="g in groups" :key="g.id" class="group" :class="g.id">
          <div class="gbody">
            <template v-for="(it, k) in g.items" :key="k">
              <div v-if="it.t === 'big'" class="big" :class="{ off: it.off, on: it.on }">
                <div class="bi"><Icon :n="it.i" /></div>
                <div v-for="(l, j) in it.l" :key="l" class="bl">{{ l }}<Icon v-if="it.ci && j === 1" n="chevS" /></div>
                <div v-if="it.c" class="bc"><Icon :n="it.off ? 'chevG' : 'chevS'" /></div>
              </div>
              <div v-else-if="it.t === 'grid'" class="sgrid"><span v-for="i in it.icons" :key="i"><Icon :n="i" /></span></div>
              <div v-else class="col" :class="{ off: it.off }">
                <div v-for="(r, j) in it.rows" :key="j" class="srow">
                  <span v-for="c in r" :key="c[0]" class="sb" :class="{ off: c[2] }"><i><Icon :n="c[0]" /></i>{{ c[1] }}<Icon v-if="c[3]" n="chevS" /></span>
                </div>
              </div>
            </template>
          </div>
          <div class="gname"><span>{{ g.name }}</span><Icon v-if="g.launch" n="launcher" /></div>
        </section>
        <div class="collapse"><Icon n="chevUp" /></div>
      </div>
    </header>

    <main class="work">
      <aside class="panel contents">
        <div class="ptitle"><h2>Contents</h2><Icon n="chev" /><Icon n="pin" /><Icon n="x" /></div>
        <div class="searchrow"><Icon n="funnel" /><div class="search"><em>Search</em><Icon n="mag" /><Icon n="chev" /></div></div>
        <div class="ctabs">
          <div class="strip"><span v-for="c in contentTabs" :key="c"><Icon :n="c" /></span></div>
          <Icon n="dots" />
        </div>
        <h3>Drawing Order</h3>
        <div class="trow r0"><Icon n="triOpen" /><Icon n="map" /><span>Map</span></div>
        <div class="trow r1"><Icon n="triOpen" /><div class="selrow"><Icon n="check" /><span>drone_point</span></div></div>
        <div class="trow r2"><Icon n="pt" /></div>
        <div class="trow r3"><Icon n="check" /><span>World Imagery</span></div>
      </aside>

      <div class="center">
        <div class="mtabs"><div class="mtab"><Icon n="map" /><span>Map</span><Icon n="x" /></div><Icon n="chev" /></div>
        <div class="map">
          <svg width="1046" height="352" viewBox="0 0 1046 352">
            <defs>
              <filter id="soft" x="-60%" y="-60%" width="220%" height="220%"><feGaussianBlur stdDeviation="10" /></filter>
              <filter id="land" x="0" y="0" width="100%" height="100%">
                <feTurbulence type="fractalNoise" baseFrequency=".045 .025" numOctaves="5" seed="12" result="n" />
                <feDisplacementMap in="SourceGraphic" in2="n" scale="85" xChannelSelector="R" yChannelSelector="G" />
              </filter>
              <filter id="soft1" x="-50%" y="-5%" width="200%" height="110%"><feGaussianBlur stdDeviation=".7" /></filter>
              <filter id="rust" x="0" y="0" width="100%" height="100%">
                <feTurbulence type="fractalNoise" baseFrequency=".022 .009" numOctaves="6" seed="8" />
                <feColorMatrix values="0 0 0 0 .84  0 0 0 0 .49  0 0 0 0 .29  3.600 0 0 0 -1.8" />
              </filter>
              <filter id="moss" x="0" y="0" width="100%" height="100%">
                <feTurbulence type="fractalNoise" baseFrequency=".03 .014" numOctaves="6" seed="21" />
                <feColorMatrix values="0 0 0 0 .48  0 0 0 0 .53  0 0 0 0 .4  0 3 0 0 -1.45" />
              </filter>
              <filter id="grain" x="0" y="0" width="100%" height="100%">
                <feTurbulence type="fractalNoise" baseFrequency=".14 .12" numOctaves="3" seed="4" />
                <feColorMatrix values="0 0 0 0 .8  0 0 0 0 .65  0 0 0 0 .46  0 0 3 0 -1.5" />
              </filter>
              <filter id="wobble" x="-5%" y="-5%" width="110%" height="110%">
                <feTurbulence type="fractalNoise" baseFrequency=".1" numOctaves="3" seed="3" />
                <feDisplacementMap in="SourceGraphic" scale="7" xChannelSelector="R" yChannelSelector="G" />
              </filter>
            </defs>
            <rect width="1046" height="352" fill="#a58762" />
            <g filter="url(#land)">
              <path d="M-60-60h1166v472H-60z" fill="#aa8760" />
              <path d="M300 420L330 325 400 300 455 278 470 250 500 232 540 224 580 212 615 175 650 160 680 160 690 120 760 60 830 -60 1106-60V420z" fill="#9e8b69" filter="url(#soft)" />
              <g filter="url(#soft)"><ellipse v-for="(b, i) in blobs" :key="i" :cx="b[0]" :cy="b[1]" :rx="b[2]" :ry="b[3]" :fill="b[4]" :opacity="b[5]" /></g>
            </g>
            <rect width="800" height="352" filter="url(#rust)" opacity=".24" />
            <rect width="1046" height="352" filter="url(#moss)" opacity=".2" />
            <rect width="1046" height="352" filter="url(#grain)" opacity=".08" />
            <g filter="url(#wobble)" fill="none">
              <g stroke="#d6ab7c" stroke-width="3" opacity=".5" stroke-linecap="round" stroke-linejoin="round"><path d="M12 136l12 4 8-4M26 142l6 6M78 128l2 16-2 12M362 52v10l-4 8M740 200l2 12 8 5M565 277l14-2 8-3M733 260l2 14-3 6M810 295l-4 14-4 10M350 290l-8 8M140 328l16 6 8 10M1000 70l-20 10-4 12M724 86l6-4" /></g>
              <path d="M120 200L105 225L100 240L112 262L118 270" stroke="#c29e73" stroke-width="2" opacity=".6" />
              <path d="M455 178L480 192L520 205L530 213M480 195L470 210" stroke="#8e6444" stroke-width="1.500" opacity=".7" />
              <path d="M690 60L680 85L655 95L640 115M655 170L640 200L620 225L607 252" stroke="#96694a" stroke-width="1.500" opacity=".6" />
              <path d="M568 228L555 245L552 275M470 250L476 290M355 340L375 315L400 305" stroke="#6f7757" stroke-width="1.800" opacity=".5" />
            </g>
            <path :d="stream" fill="none" stroke="#716f4e" stroke-width="4" opacity=".35" filter="url(#wobble)" />
            <path :d="stream" fill="none" stroke="#c9ab7d" stroke-width="2" opacity=".85" filter="url(#wobble)" />
            <path :d="stream2" fill="none" stroke="#b5a078" stroke-width="2.500" opacity=".6" filter="url(#wobble)" />
            <path :d="stream2" fill="none" stroke="#5f6349" stroke-width="1.400" opacity=".8" stroke-dasharray="14 6" filter="url(#wobble)" />
            <path d="M776 187C830 188 880 180 1046 174" fill="none" stroke="#9ba888" stroke-width="2.200" opacity=".8" />
            <g filter="url(#soft1)" fill="none">
              <path d="M807 0C802 60 800 110 797 140S789 220 786 260S780 310 775 352" stroke="#d09a70" stroke-width="6" opacity=".75" />
              <path d="M823 0L808 140L796 235L782 352" stroke="#4c6b59" stroke-width="3" />
              <path d="M823 0L808 140L796 235L782 352" stroke="#8aa58c" stroke-width="1" transform="translate(2.200)" />
            </g>
            <g fill="#40533f" opacity=".6" filter="url(#wobble)"><ellipse v-for="(s, i) in scrub" :key="i" :cx="s[0]" :cy="s[1]" :rx="s[2]" :ry="s[3]" /></g>
            <circle v-for="(p, i) in pts" :key="i" :cx="p[0]" :cy="p[1]" r="3" fill="#f4fffc" stroke="#23302c" stroke-width="1.400" />
          </svg>
          <div class="note"><Icon n="note" /></div>
        </div>
        <div class="mstatus">
          <div class="scale"><span>1:69,751</span><Icon n="drop" /></div>
          <i class="vl a" /><Icon n="sGridAdd" /><Icon n="sGrid" /><Icon n="sSnap" /><Icon n="sCross" /><Icon n="sNorth" /><i class="vl b" />
          <span class="coord">47.0581935°E 25.3834099°N</span><Icon n="chev" class="cc" />
          <i class="vl c" /><Icon n="selFeat" /><span class="sf">Selected Features: 0</span><i class="vl d" /><Icon n="pauseBig" class="pb" /><i class="vl e" /><Icon n="refresh" />
        </div>
        <div class="ttabs"><div class="ttab"><Icon n="tabTbl" /><span>drone_point</span><Icon n="xw" /></div><Icon n="chev" /></div>
        <div class="tframe">
          <div class="tbar">
            <b class="f1">Field:</b>
            <span class="tb b1"><Icon n="addF" />Add</span>
            <span class="tb b2"><Icon n="calc" />Calculate</span>
            <i class="tv" />
            <b class="f2">Selection:</b>
            <span class="tb b3"><Icon n="selBy" />Select By Attributes</span>
            <span class="tb b4 dim"><Icon n="zoomG" />Zoom To</span>
            <span class="tb b5"><Icon n="swap" />Switch</span>
            <span class="tb b6 dim"><Icon n="clr" />Clear</span>
            <span class="tb b7 dim"><Icon n="del" />Delete</span>
            <span class="tb b8 dim"><Icon n="cpy" />Copy</span>
            <Icon n="menu" class="bm" />
          </div>
          <div class="grid">
            <div class="data">
              <div class="tr hd"><span class="c0"><Icon n="corner" /></span><span class="c1">OBJECTID *</span><span class="c2">Shape *</span><span class="c3">x</span><span class="c4">y</span><span class="c5">image_path</span></div>
              <div v-for="r in rows" :key="r.n" class="tr" :class="{ cur: r.n === 1, alt: r.n % 2 === 0 }">
                <span class="c0">{{ r.n }}</span><span class="c1">{{ r.n }}</span><span class="c2">Point</span><span class="c3">{{ r.x }}</span><span class="c4">{{ r.y }}</span><span class="c5">{{ r.p }}</span>
              </div>
            </div>
            <div class="vs"><Icon n="chevUp" /><div class="thumb" /><Icon n="chev" /></div>
            <div class="hs"><Icon n="left" /><Icon n="right" /></div>
          </div>
          <div class="tfoot">
            <span class="allbtn"><Icon n="all" /></span><Icon n="selRows" class="sr" /><Icon n="first" /><Icon n="last" class="la" /><span class="cnt">0 of 12 selected</span>
            <span class="fl">Filters:</span><span class="fg"><Icon n="clock" /><Icon n="range" /></span><Icon n="filt" /><i class="vl fa" /><Icon n="upDown" />
            <Icon n="minus" class="mi" /><div class="slider"><i /></div><Icon n="plus" />
            <span class="pct">100%<Icon n="drop" /></span><i class="vl fb" /><Icon n="refresh" />
          </div>
        </div>
        <div class="cursor"><Icon n="cursor" /></div>
      </div>

      <aside class="panel catalog">
        <div class="ptitle"><h2>Catalog</h2><Icon n="chev" /><Icon n="pin" /><Icon n="x" /></div>
        <div class="ktabs"><span class="act">Project</span><span>Portal</span><span>Favorites</span><Icon n="menu" /></div>
        <div class="ksearch"><Icon n="back" /><div class="hm"><Icon n="home" /></div><div class="search"><em>Search Project</em><Icon n="mag" /><Icon n="chev" /></div></div>
        <div class="ktree">
          <div v-for="k in catalog" :key="k[1]" class="krow" :class="['l' + k[2], { sel: k[1] === 'drone_point' }]">
            <i v-if="k[2] < 2" class="kt"><Icon :n="k[3] ? 'triOpen' : 'triShut'" /></i><i class="ki"><Icon :n="k[0]" /></i><span>{{ k[1] }}</span>
          </div>
        </div>
      </aside>
      <div class="side"><span>Create Features</span><i /></div>
    </main>
  </div>
</template>

<style>
html, body { margin: 0; overflow: hidden; background: #eaeaea; }
</style>
<style scoped>
.app { width: 1914px; height: 966px; overflow: hidden; background: #eaeaea; font-family: "Open Sans", "Noto Sans", sans-serif; font-size: 14px; letter-spacing: -.35px; color: #333; }
.app * { box-sizing: border-box; }
.app :deep(.ic) { display: block; flex: none; }
i { font-style: normal; }

.ribbon { height: 126px; background: #f6f8f7; border-bottom: 2px solid #cfd1d1; }
.tabs { height: 15px; position: relative; display: flex; align-items: flex-start; white-space: nowrap; }
.tab { height: 21px; line-height: 20px; margin-top: -11px; font-size: 14.500px; font-weight: 400; color: #444; letter-spacing: -.15px; }
.tabs > .tab { flex: none; }
.t1 { margin-left: 17px; width: 92px; } .t2 { width: 69px; } .t3 { width: 80px; } .t4 { width: 96px; } .t5 { width: 70px; } .t6 { width: 66px; } .t7 { width: 97px; } .t8 { width: 83px; }
.tab.cur { font-weight: 700; letter-spacing: -.7px; position: relative; color: #222; }
.tab.cur::after { content: ""; position: absolute; left: -2px; top: 18px; width: 33px; height: 3px; background: #0f6cb6; }
.ctx { height: 9px; background: #fff; border: 1px solid #e2e4e4; border-top: 0; border-radius: 0 0 4px 4px; display: flex; flex: none; }
.ctx1 { width: 74px; padding-left: 19px; }
.ctx2 { width: 303px; margin-left: 24px; padding-left: 21px; }
.ctx2 .tab:nth-child(1) { width: 132px; } .ctx2 .tab:nth-child(2) { width: 98px; }
.groups { display: flex; height: 109px; }
.group { height: 105px; border-right: 1px solid #b9bbbb; display: flex; flex-direction: column; }
.gbody { flex: 1; display: flex; height: 88px; }
.gname { height: 15px; margin-bottom: -2px; display: flex; justify-content: center; align-items: center; color: #555; flex: none; }
.gname span { flex: 1; text-align: center; line-height: 14px; }
.gname .ic { margin-right: 3px; width: 11px; margin-left: 3px; }
.g1 { width: 157px; } .g2 { width: 250px; padding-left: 9px; } .g3 { width: 284px; padding-left: 12px; } .g4 { width: 293px; padding-left: 6px; } .g5 { width: 296px; padding-left: 13px; } .g6 { width: 207px; padding-left: 12px; } .g7 { width: 174px; padding-left: 12px; }
.g1 .gname { margin-right: 7px; } .g2 .gname { margin-left: -10px; } .g6 .gname { margin-left: -13px; } .g3 .gname { margin-left: -12px; } .g5 .gname { margin-left: -13px; } .g4 .gname { margin-left: -10px; } .g7 .gname { margin-left: -12px; }
.big { display: flex; flex-direction: column; align-items: center; height: 86px; margin-top: -1px; flex: none; }
.bi { height: 46px; display: flex; align-items: center; padding-top: 1px; }
.bl { line-height: 15.500px; display: flex; align-items: center; white-space: nowrap; }
.bl .ic { margin-left: 3px; margin-top: 2px; }
.bc { height: 15px; display: flex; align-items: center; }
.off { color: #9a9a9a; }
.on { background: #99d8fd; border-radius: 3px; color: #1f4e79; }
.g1 .big { width: 53px; }
.g2 .big:nth-child(1) { width: 55px; } .g2 .big:nth-child(3) { width: 84px; } .g2 .big:nth-child(4) { width: 42px; }
.g3 .big:nth-child(1) { width: 60px; } .g3 .big:nth-child(2) { width: 50px; }
.g3 .col { margin-left: 1px; }
.g4 .big:nth-child(1) { width: 52px; } .g4 .big:nth-child(2) { width: 62px; } .g4 .big:nth-child(3) { width: 73px; }
.g5 .big:nth-child(1) { width: 53px; } .g5 .big:nth-child(2) { width: 60px; } .g5 .big:nth-child(3) { width: 76px; } .g5 .big:nth-child(4) { width: 90px; }
.g6 .col { width: 133px; } .g6 .big { width: 50px; }
.g7 .big { width: 66px; margin-right: 6px; }
.sgrid { width: 50px; padding-left: 3px; display: grid; grid-template-columns: 26px 20px; grid-auto-rows: 28.600px; align-content: start; }
.sgrid span { display: flex; align-items: center; }
.srow { height: 28.700px; display: flex; align-items: center; white-space: nowrap; }
.sb { display: flex; align-items: center; margin-right: 7px; }
.sb i { width: 24px; display: flex; justify-content: flex-start; }
.g4 .sb i { justify-content: center; width: 20px; margin-right: 4px; }
.sb > .ic { margin-left: 6px; }
.collapse { margin: auto 7px 5px auto; }

.work { display: flex; height: 840px; padding-top: 8px; }
.panel { background: #f6f8f7; border: 1px solid #dcdede; border-radius: 4px 4px 0 0; height: 840px; flex: none; }
.contents { width: 313px; margin-left: 3px; }
.center { width: 1050px; margin-left: 7px; height: 832px; position: relative; flex: none; }
.catalog { width: 498px; margin-left: 7px; }
.ptitle { display: flex; align-items: center; height: 35px; margin-bottom: 1px; padding: 0 7px 0 7px; }
h2 { margin: 0; flex: 1; font-size: 18px; font-weight: 400; letter-spacing: -.35px; color: #222; line-height: 24px; }
.ptitle .ic:nth-child(3) { margin: 0 13px 2px 12px; }
.search { height: 29px; border: 1px solid #a3a6a6; background: #fff; display: flex; align-items: center; padding: 0 6px 2px 6px; flex: 1; }
.search em { flex: 1; font-size: 14px; color: #555; }
.search .ic:last-child { margin-left: 14px; }
.searchrow { display: flex; align-items: center; padding: 0 3px 0 4px; height: 29px; }
.searchrow .search { margin-left: 8px; }
.ctabs { display: flex; height: 54px; padding-left: 17px; }
.strip { width: 240px; position: relative; border-bottom: 1px solid #c9cbcb; display: flex; height: 52px; }
.strip::after { content: ""; position: absolute; left: 0; bottom: -1px; width: 39px; height: 4px; background: #0f6cb6; }
.strip span { width: 39.200px; padding: 12px 0 0 6px; flex: none; }
.strip span:nth-child(4), .strip span:nth-child(5), .strip span:nth-child(6) { padding-left: 3px; }
.strip span:last-child { width: 6px; padding-left: 0; }
.ctabs > .ic { margin: 27px 0 0 14px; }
h3 { margin: 7px 0 0 17px; font-size: 16px; font-weight: 400; line-height: 30px; color: #4a4a4a; letter-spacing: -.15px; height: 34px; }
.trow { height: 29px; display: flex; align-items: center; color: #4a4a4a; }
.r0 { padding-left: 3px; height: 25px; margin-bottom: 1px; } .r0 .ic:nth-child(2) { margin: 0 7px 0 5px; }
.r1 { padding-left: 16px; }
.selrow { margin-left: 3px; width: 283px; height: 30px; background: #c3daee; border: 1px solid #2585bd; display: flex; align-items: center; padding-left: 2px; }
.selrow span, .r3 span { margin-left: 6px; }
.selrow .ic { margin-top: 2px; }
.selrow span, .r3 span { letter-spacing: -.2px; }
.r2 { padding-left: 34px; height: 25px; }
.r3 { padding-left: 30px; height: 32px; margin-top: 0; }

.mtabs { height: 29px; display: flex; justify-content: space-between; align-items: center; padding: 0 6px 0 1px; border-bottom: 3px solid #d2d4d6; margin-right: 2px; margin-left: 1px; }
.mtab { height: 28px; width: 91px; margin-left: -1px; background: #d2d4d6; border-radius: 4px 4px 0 0; display: flex; align-items: center; padding-left: 7px; color: #444; margin-top: -1px; }
.mtab span { margin: 0 12px 0 6px; }
.map { margin-left: 2px; width: 1046px; height: 352px; position: relative; overflow: hidden; }
.map > svg { display: block; }
.note { position: absolute; left: 1012px; top: 322px; }
.mstatus { height: 31px; margin-left: 1px; width: 1048px; background: #fbfcfc; border: 1px solid #dadcdc; border-top: 0; display: flex; align-items: center; padding: 0 0 1px 6px; white-space: nowrap; }
.scale { width: 119px; height: 25px; margin-top: 1px; border: 1px solid #999; background: #fff; display: flex; align-items: center; justify-content: space-between; padding: 0 5px 0 7px; font-size: 13.500px; letter-spacing: -.45px; flex: none; }
.vl { width: 1px; height: 21px; background: #a9abab; flex: none; }
.a { margin: 0 7px 0 6px; } .mstatus .ic { margin-right: 7px; } .scale .ic { margin-right: 0 !important; } .mstatus .ic:nth-child(4) { margin: 0 9px 0 1px; } .b { margin: 0 0 0 3px; }
.coord { margin-left: 168px; width: 171px; margin-right: 14px; letter-spacing: -.6px; }
.c { margin-left: 165px; margin-right: 8px; }
.sf { color: #8d8d8d; width: 124px; margin-left: -3px; } .d { margin: 0 10px 0 8px; } .e { margin: 0 7px 0 3px; }
.ttabs { height: 37px; display: flex; justify-content: space-between; align-items: center; padding: 7px 7px 0 0; border-bottom: 4px solid #2273b5; margin-right: 1px; }
.ttab { width: 141px; height: 27px; background: #0574ce; color: #fff; border-radius: 4px 4px 0 0; display: flex; align-items: center; padding-left: 8px; margin-bottom: -1px; }
.ttab span { margin: 0 12px 0 8px; width: 77px; }
.tframe { height: 382px; margin-left: 1px; width: 1048px; border: 1px solid #d0d3d4; border-top: 0; background: #f6f8f7; padding: 1px 1px 0 2px; }
.tbar { height: 37px; border: 1px solid #c5c9ca; background: #eef0f0; display: flex; align-items: center; white-space: nowrap; width: 1043px; letter-spacing: -.2px; padding-bottom: 2px; }
.tb { display: flex; align-items: center; flex: none; } .tb .ic { margin-right: 5px; }
b { color: #4a4a4a; font-size: 13.800px; letter-spacing: -.55px; }
.f1 { width: 43px; margin-left: 6px; flex: none; } .b1 { width: 62px; } .b2 { width: 94px; } .tv { width: 1px; height: 30px; background: #d5d7d7; margin-right: 8px; } .f2 { width: 75px; flex: none; }
.b3 { width: 158px; } .b4 { width: 91px; } .b5 { width: 76px; } .b6 { width: 67px; } .b7 { width: 74px; } .b8 { flex: 1; } .bm { margin-right: 9px; }
.b3 .ic, .b5 .ic, .b4 .ic { margin-right: 3px; }
.dim { color: #c3c6c7; }
.grid { height: 310px; display: grid; grid-template-columns: 1021px 21px; grid-template-rows: 286px 22px; border: 1px solid #c9cccd; border-right: 0; width: 1043px; border-left: 0; background: #fff; }
.data { overflow: hidden; font-size: 13px; letter-spacing: -.25px; color: #4c4c4c; }
.tr { display: flex; height: 30px; }
.tr span { border-right: 1px solid #cfcfcf; border-bottom: 1px solid #cfcfcf; height: 30px; line-height: 28px; padding-left: 5px; background: #fff; white-space: nowrap; overflow: hidden; }
.tr.alt span, .tr .c0, .hd span { background: #ebebeb; }
.tr.hd { height: 29px; } .hd span { height: 29px; line-height: 30px; font-weight: 600; letter-spacing: -.1px; }
.hd .c0 { background: #fff; padding: 13px 0 0 4px; } .tr.hd .c5 { border-right-color: #ebebeb; }
.tr .c0 { width: 20px; padding-left: 4px; } .c1 { width: 80px; } .c2 { width: 59px; } .tr .c3 { width: 72px; } .tr .c4 { width: 72px; } .c5 { width: 162px; }
.tr:not(.hd) .c5 { letter-spacing: .1px; }
.tr:not(.hd) .c3, .tr:not(.hd) .c4 { text-align: right; padding-right: 4px; padding-left: 0; }
.tr .c4, .tr.alt .c4 { background: #7ff6ff; }
.hd .c4, .tr.cur .c4 { background: #c5dff5; } .tr.hd .c4 { border-bottom: 2px solid #1f6aa5; }
.tr.cur .c0 { background: #c5dff5; border-right: 3px solid #1f6aa5; }
.vs { grid-row: 1 / 3; grid-column: 2; background: #ebebeb; display: flex; flex-direction: column; align-items: center; padding-top: 7px; border-right: 1px solid #c9cccd; }
.vs .ic { width: 10px; height: 6px; } .thumb { width: 11px; height: 163px; background: #b3b3b3; border-radius: 6px; margin: 9px 0 88px; }
.hs { background: #f3f3f3; display: flex; justify-content: space-between; align-items: center; padding: 0 8px 0 9px; }
.tfoot { display: flex; align-items: center; height: 31px; white-space: nowrap; margin-left: -1px; }
.allbtn { width: 38px; height: 26px; background: #c0c4c8; border: 2px solid #6fb2dc; display: flex; align-items: center; justify-content: center; }
.sr { margin: -5px 19px 0 14px; } .la { margin: 0 15px 0 17px; } .cnt { width: 461px; letter-spacing: -.25px; } .fl { width: 46px; }
.fg { display: flex; gap: 6px; background: #f0f2f1; padding: 4px 3px 4px 5px; margin-right: 4px; } .fa { margin: 0 8px 0 2px; } .mi { margin: 0 9px 0 18px; }
.slider { width: 119px; height: 15px; margin-right: 8px; display: flex; align-items: center; background: linear-gradient(90deg, #a5a7a7 60px, #e2e4e4 60px) 0 50% / 100% 3px no-repeat; }
.slider i { width: 4px; height: 13px; background: #777; margin-left: 57px; }
.pct { width: 73px; height: 26px; background: #fff; margin: 0 6px 0 7px; padding: 0 6px 0 9px; display: flex; align-items: center; justify-content: space-between; font-size: 13.500px; letter-spacing: -.45px; }
.fb { margin-right: 9px; }
.cursor { position: absolute; left: 227px; top: 502px; }

.catalog .ptitle { padding-left: 6px; }
.ktabs { display: flex; height: 28px; padding: 0 9px 0 6px; color: #4a4a4a; margin-top: -1px; font-size: 14.500px; letter-spacing: -.05px; }
.ktabs span { height: 26px; line-height: 24px; margin-right: 12px; }
.ktabs .act { color: #333; border-bottom: 2px solid #0f6cb6; font-weight: 600; letter-spacing: -.05px; }
.ktabs .ic { margin: 6px 0 0 auto; }
.ksearch { display: flex; align-items: center; margin: 9px 7px 0 5px; height: 29px; }
.hm { width: 24px; height: 29px; border: 1px solid #cfd2d2; border-right: 0; margin-left: 5px; display: flex; align-items: center; justify-content: center; }
.ksearch .search { padding-left: 5px; }
.ktree { margin-top: 8px; }
.krow { height: 28.700px; display: flex; align-items: center; color: #4a4a4a; }
.kt { width: 16px; } .ki { width: 29px; }
.l0 { padding-left: 14px; } .l1 { padding-left: 33px; } .l1 .kt { width: 18px; } .l1 .ki { width: 28px; } .l2 { margin-left: 64px; padding-left: 4px; width: 424px; }
.sel { background: #cbcbcb; border: 1px solid #9b9b9b; padding-left: 3px; }
.side { flex: 1; display: flex; }
.side span { writing-mode: vertical-rl; margin-left: 9px; line-height: 18px; color: #555; height: 100px; white-space: nowrap; letter-spacing: -.4px; }
.side i { width: 6px; height: 97px; background: #c4c4c4; margin-left: auto; }
</style>
